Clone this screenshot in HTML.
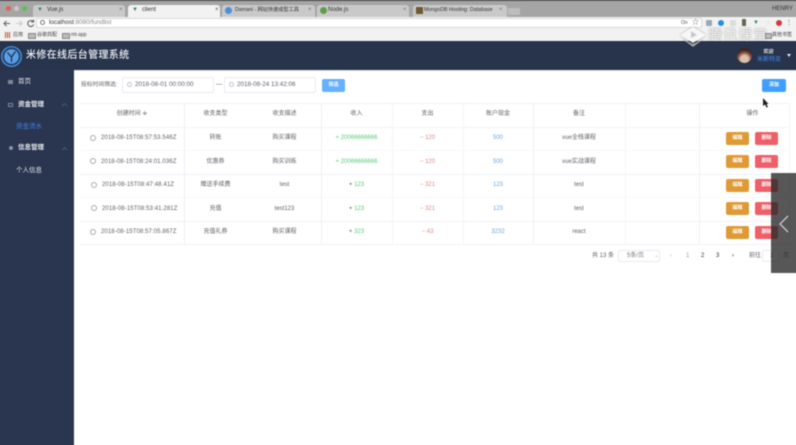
<!DOCTYPE html>
<html lang="zh"><head><meta charset="utf-8">
<style>
html,body{margin:0;padding:0;width:796px;height:445px;overflow:hidden;background:#fff}
body{position:relative;font-family:"Liberation Sans","Noto Sans CJK SC",sans-serif;color:#606266}
.a{position:absolute}
.t{position:absolute;white-space:nowrap;line-height:10px;font-size:6px;transform-origin:center}
.c{text-align:center}
#wrap{position:absolute;left:0;top:0;width:796px;height:445px;filter:blur(.4px)}
.tab{position:absolute;top:5px;height:12px;background:#c9c9c9;border-radius:3px 3px 0 0;font-size:6px;line-height:11px;color:#333}
.hl{position:absolute;height:1px;background:#eef0f5;left:80px;width:709px}
.vl{position:absolute;width:1px;background:#eef0f5;top:103px;height:141px}
.btn{position:absolute;width:23px;height:13px;border-radius:2px;color:#fff;font-size:5px;line-height:13px;text-align:center;font-weight:bold}
.o{background:#e09a35;left:726px}.r{background:#ee5f69;left:755px}
.g{color:#5fc87a}.d{color:#d98a8a}.b{color:#6ea6dc}
.clk{position:absolute;left:90px;width:6px;height:6px;border:.7px solid #aaa;border-radius:50%;box-sizing:border-box}
</style></head><body>
<div id="wrap">
<!-- chrome -->
<div class="a" style="left:-6px;top:-6px;width:808px;height:7px;background:#555"></div>
<div class="a" style="left:-6px;top:1px;width:808px;height:16px;background:#a5a5a5"></div>
<div class="a" style="left:6px;top:6px;width:5px;height:5px;border-radius:50%;background:#e0625a"></div>
<div class="a" style="left:14px;top:6px;width:5px;height:5px;border-radius:50%;background:#c9c9c9"></div>
<div class="a" style="left:22px;top:6px;width:5px;height:5px;border-radius:50%;background:#5cc05a"></div>
<div class="tab" style="left:33px;width:92px"><span style="color:#2f8a70;margin:0 4px 0 4px">▼</span>Vue.js<span class="a" style="left:86px;color:#777">×</span></div>
<div class="tab" style="left:128px;width:92px;background:#f2f2f2"><span style="color:#2f8a70;margin:0 4px 0 4px">▼</span>client<span class="a" style="left:87px;color:#555">×</span></div>
<div class="tab" style="left:222px;width:93px"><span class="a" style="left:3px;top:2px;width:7px;height:7px;border-radius:50%;background:#4a90d9"></span><span style="margin-left:13px;font-size:5.2px">Damani - 网站快速成型工具</span><span class="a" style="left:86px;color:#777">×</span></div>
<div class="tab" style="left:317px;width:92px"><span class="a" style="left:3px;top:2px;width:7px;height:7px;border-radius:50%;background:#5aa04a"></span><span style="margin-left:11px">Node.js</span><span class="a" style="left:86px;color:#777">×</span></div>
<div class="tab" style="left:413px;width:94px"><span class="a" style="left:3px;top:2px;width:7px;height:7px;background:#6b5a2a"></span><span style="margin-left:11px;font-size:5.3px">MongoDB Hosting: Database</span><span class="a" style="left:86px;color:#777;background:#c9c9c9">×</span></div>
<div class="a" style="left:508px;top:8px;width:12px;height:7px;background:#bdbdbd"></div>
<div class="t" style="left:772px;top:4px;font-size:6px;color:#333">HENRY</div>

<div class="a" style="left:-6px;top:17px;width:808px;height:12px;background:#f2f2f2"></div>
<div class="a" style="left:36px;top:18px;width:666px;height:10px;background:#fff;border:1px solid #d8d8d8;border-radius:2px;box-sizing:border-box"></div>
<svg class="a" style="left:0;top:16px" width="40" height="15" viewBox="0 0 40 15" fill="none" stroke-width="1.1">
<path d="M10 7.500H4M6.500 5L4 7.500 6.500 10" stroke="#666"/><path d="M16 7.500h6M19.500 5L22 7.500 19.500 10" stroke="#ccc"/><path d="M33 5.500a3 3 0 1 0 .6 3" stroke="#666"/><path d="M33.500 3.500v2.500h-2.500" stroke="#666"/></svg>
<div class="a" style="left:40px;top:20px;width:5px;height:5px;border:1px solid #777;border-radius:50%;box-sizing:border-box"></div>
<div class="t" style="left:49px;top:18px;font-size:6.3px;color:#333">localhost<span style="color:#888">:8080/fundlist</span></div>
<div class="t" style="left:681px;top:18px;font-size:5px;color:#555">On</div>
<div class="t" style="left:692px;top:18px;font-size:7px;color:#666">☆</div>
<div class="a" style="left:706px;top:20px;width:6px;height:6px;background:#9aa8b8;border-radius:1px"></div>
<div class="a" style="left:718px;top:20px;width:6px;height:6px;background:#2a8fd8;border-radius:50%"></div>
<div class="a" style="left:730px;top:20px;width:6px;height:6px;background:#ddd"></div>
<div class="a" style="left:742px;top:19px;width:4px;height:7px;background:#665"></div>
<div class="t" style="left:753px;top:18px;font-size:6px;color:#2f8a70">▼</div>
<div class="a" style="left:765px;top:20px;width:6px;height:6px;background:#eee;border-radius:50%"></div>
<div class="a" style="left:776px;top:20px;width:6px;height:6px;background:#d9363e;border-radius:50%"></div>
<div class="t" style="left:786px;top:18px;font-size:6px;color:#555">⋮</div>

<div class="a" style="left:-6px;top:29px;width:808px;height:12px;background:#f2f2f2"></div>
<div class="a" style="left:5px;top:32px;width:5px;height:6px;background:repeating-linear-gradient(90deg,#c8502a 0 1px,transparent 1px 2px)"></div>
<div class="t" style="left:13px;top:30px;font-size:5px;color:#444">应用</div>
<div class="a" style="left:28px;top:33px;width:6px;height:4px;background:#bbb;border:.5px solid #888"></div>
<div class="t" style="left:37px;top:30px;font-size:5px;color:#444">谷歌商配</div>
<div class="a" style="left:62px;top:33px;width:6px;height:4px;background:#bbb;border:.5px solid #888"></div>
<div class="t" style="left:71px;top:30px;font-size:5px;color:#444">mt-app</div>
<div class="a" style="left:765px;top:33px;width:5px;height:4px;background:#bbb;border:.5px solid #888"></div>
<div class="t" style="left:772px;top:30px;font-size:5px;color:#444">其他书签</div>

<!-- header -->
<div class="a" style="left:-6px;top:41px;width:808px;height:29px;background:#28344c"></div>
<div class="a" style="left:-6px;top:70px;width:808px;height:1px;background:#dfe6f0"></div>
<svg class="a" style="left:1px;top:46px" width="21" height="21" viewBox="0 0 21 21" fill="none">
<circle cx="10.500" cy="10.500" r="9.800" fill="#24426e" stroke="#4d9be8" stroke-width="1.200"/><circle cx="10.500" cy="10.500" r="7.300" fill="#5a9fe6"/><path d="M6.500 6.500l4 4.500M14.500 5.500l-4 5.500v5" stroke="#22304a" stroke-width="1.300"/></svg>
<div class="t" style="left:26px;top:50px;font-size:10px;line-height:12px;letter-spacing:.35px;color:#eef0f4;font-weight:500">米修在线后台管理系统</div>
<div class="a" style="left:737px;top:48px;width:15px;height:15px;border-radius:50%;background:radial-gradient(circle at 50% 75%,#dcc0ac 0 28%,#8f5646 48%,#3e2522 68%)"></div>
<div class="t c" style="left:755px;top:47px;width:27px;font-size:5px;color:#e8e8e8;font-weight:bold">欢迎</div>
<div class="t c" style="left:755px;top:55px;width:28px;font-size:6px;color:#3f8cf0">米斯特吴</div>
<div class="a" style="left:787px;top:54px;border:2px solid transparent;border-top:3px solid #e8e8e8"></div>

<!-- sidebar -->
<div class="a" style="left:-6px;top:70px;width:80px;height:381px;background:#2a3650"></div>
<div class="a" style="left:8px;top:80px;width:5px;height:4px;background:#7d8696"></div>
<div class="t" style="left:18px;top:77px;font-size:6.500px;color:#e6e8ec">首页</div>
<div class="a" style="left:8px;top:103px;width:5px;height:4px;border:1px solid #7d8696;box-sizing:border-box"></div>
<div class="t" style="left:18px;top:100px;font-size:6.500px;color:#e6e8ec;font-weight:bold">资金管理</div>
<svg class="a" style="left:61px;top:102px" width="7" height="5" fill="none"><path d="M1 4l2.500-2.500L6 4" stroke="#4a566c"/></svg>
<div class="t" style="left:16px;top:122px;font-size:6.500px;color:#3f7fe8">资金流水</div>
<div class="a" style="left:9px;top:146px;width:4px;height:4px;border-radius:50%;background:#8a93a3"></div>
<div class="t" style="left:18px;top:143px;font-size:6.500px;color:#e6e8ec;font-weight:bold">信息管理</div>
<svg class="a" style="left:61px;top:146px" width="7" height="5" fill="none"><path d="M1 4l2.500-2.500L6 4" stroke="#4a566c"/></svg>
<div class="t" style="left:16px;top:166px;font-size:6.500px;color:#e6e8ec">个人信息</div>

<!-- filter -->
<div class="t" style="left:81px;top:80px;font-size:5.800px;color:#606266">投标时间筛选:</div>
<div class="a" style="left:122px;top:77px;width:92px;height:16px;border:1px solid #e9ebf0;box-sizing:border-box;border-radius:2px"></div>
<div class="a" style="left:127px;top:82px;width:5px;height:5px;border:.7px solid #c0c4cc;border-radius:50%;box-sizing:border-box"></div>
<div class="t" style="left:135px;top:80px;font-size:6.300px;color:#606266">2018-08-01 00:00:00</div>
<div class="t" style="left:216px;top:80px;font-size:6.500px;color:#606266">—</div>
<div class="a" style="left:224px;top:77px;width:92px;height:16px;border:1px solid #e9ebf0;box-sizing:border-box;border-radius:2px"></div>
<div class="a" style="left:229px;top:82px;width:5px;height:5px;border:.7px solid #c0c4cc;border-radius:50%;box-sizing:border-box"></div>
<div class="t" style="left:237px;top:80px;font-size:6.300px;color:#606266">2018-08-24 13:42:06</div>
<div class="a" style="left:322px;top:79px;width:23px;height:13px;background:#66b1ff;border-radius:2px;color:#fff;font-size:5px;line-height:13px;text-align:center;font-weight:bold">筛选</div>
<div class="a" style="left:762px;top:79px;width:24px;height:13px;background:#409eff;border-radius:2px;color:#fff;font-size:5px;line-height:13px;text-align:center;font-weight:bold">添加</div>

<!-- table -->
<div class="hl" style="top:103px;background:#f3f4f7"></div>
<div class="hl" style="top:127px;background:#f2f3f6"></div>
<div class="hl" style="top:150px;background:#f7f8fa"></div>
<div class="hl" style="top:174px"></div>
<div class="hl" style="top:197px;background:#f7f8fa"></div>
<div class="hl" style="top:221px"></div>
<div class="hl" style="top:244px;background:#f3f4f7"></div>
<div class="vl" style="left:184px"></div>
<div class="vl" style="left:321px"></div>
<div class="vl" style="left:392px;background:#f5f6f8"></div>
<div class="vl" style="left:463px;background:#f5f6f8"></div>
<div class="vl" style="left:533px"></div>
<div class="vl" style="left:625px;background:#f5f6f8"></div>
<div class="vl" style="left:699px"></div>
<div class="vl" style="left:789px;background:#f5f6f8"></div>

<!-- header row -->
<div class="t c" style="left:80px;width:104px;top:109px">创建时间 ≑</div>
<div class="t c" style="left:181px;width:69px;top:109px">收支类型</div>
<div class="t c" style="left:250px;width:69px;top:109px">收支描述</div>
<div class="t c" style="left:321px;width:71px;top:109px">收入</div>
<div class="t c" style="left:392px;width:71px;top:109px">支出</div>
<div class="t c" style="left:463px;width:70px;top:109px">账户现金</div>
<div class="t c" style="left:533px;width:92px;top:109px">备注</div>
<div class="t c" style="left:716px;width:73px;top:109px">操作</div>

<!-- rows -->
<div class="clk" style="top:135px"></div>
<div class="t" style="left:101px;top:133px;letter-spacing:.1px">2018-08-15T08:57:53.546Z</div>
<div class="t c" style="left:181px;width:69px;top:133px">转账</div>
<div class="t c" style="left:250px;width:69px;top:133px">购买课程</div>
<div class="t c g" style="left:321px;width:71px;top:133px">+ 20066666666</div>
<div class="t c d" style="left:392px;width:71px;top:133px">− 120</div>
<div class="t c b" style="left:463px;width:70px;top:133px">500</div>
<div class="t c" style="left:533px;width:92px;top:133px">vue全栈课程</div>

<div class="clk" style="top:158px"></div>
<div class="t" style="left:101px;top:157px;letter-spacing:.1px">2018-08-15T08:24:01.036Z</div>
<div class="t c" style="left:181px;width:69px;top:157px">优惠券</div>
<div class="t c" style="left:250px;width:69px;top:157px">购买训练</div>
<div class="t c g" style="left:321px;width:71px;top:157px">+ 20066666666</div>
<div class="t c d" style="left:392px;width:71px;top:157px">− 120</div>
<div class="t c b" style="left:463px;width:70px;top:157px">500</div>
<div class="t c" style="left:533px;width:92px;top:157px">vue实战课程</div>

<div class="clk" style="top:182px;left:91px"></div>
<div class="t" style="left:102px;top:180px;letter-spacing:.1px">2018-08-15T08:47:48.41Z</div>
<div class="t c" style="left:181px;width:69px;top:180px">赠送手续费</div>
<div class="t c" style="left:250px;width:69px;top:180px">test</div>
<div class="t c g" style="left:321px;width:71px;top:180px"><span style="color:#606266">+</span> 123</div>
<div class="t c d" style="left:392px;width:71px;top:180px">− 321</div>
<div class="t c b" style="left:463px;width:70px;top:180px">123</div>
<div class="t c" style="left:533px;width:92px;top:180px">test</div>

<div class="clk" style="top:205px;left:91px"></div>
<div class="t" style="left:102px;top:204px;letter-spacing:.1px">2018-08-15T08:53:41.281Z</div>
<div class="t c" style="left:181px;width:69px;top:204px">充值</div>
<div class="t c" style="left:250px;width:69px;top:204px">test123</div>
<div class="t c g" style="left:321px;width:71px;top:204px"><span style="color:#606266">+</span> 123</div>
<div class="t c d" style="left:392px;width:71px;top:204px">− 321</div>
<div class="t c b" style="left:463px;width:70px;top:204px">123</div>
<div class="t c" style="left:533px;width:92px;top:204px">test</div>

<div class="clk" style="top:229px"></div>
<div class="t" style="left:101px;top:227px;letter-spacing:.1px">2018-08-15T08:57:05.867Z</div>
<div class="t c" style="left:181px;width:69px;top:227px">充值礼券</div>
<div class="t c" style="left:250px;width:69px;top:227px">购买课程</div>
<div class="t c g" style="left:321px;width:71px;top:227px"><span style="color:#606266">+</span> 323</div>
<div class="t c d" style="left:392px;width:71px;top:227px">− 43</div>
<div class="t c b" style="left:463px;width:70px;top:227px">3232</div>
<div class="t c" style="left:533px;width:92px;top:227px">react</div>

<!-- buttons -->
<div class="btn o" style="top:132px">编辑</div><div class="btn r" style="top:132px">删除</div>
<div class="btn o" style="top:155px">编辑</div><div class="btn r" style="top:155px">删除</div>
<div class="btn o" style="top:179px">编辑</div><div class="btn r" style="top:179px">删除</div>
<div class="btn o" style="top:202px">编辑</div><div class="btn r" style="top:202px">删除</div>
<div class="btn o" style="top:226px">编辑</div><div class="btn r" style="top:226px">删除</div>

<!-- pagination -->
<div class="t" style="left:592px;top:251px">共 13 条</div>
<div class="a" style="left:618px;top:250px;width:42px;height:12px;border:1px solid #e9ebf0;box-sizing:border-box;border-radius:2px"></div>
<div class="t" style="left:627px;top:251px;color:#777">5条/页</div>
<div class="t" style="left:654px;top:251px;color:#c0c4cc">⌄</div>
<div class="t" style="left:670px;top:251px;color:#c0c4cc">‹</div>
<div class="t" style="left:686px;top:251px;color:#999">1</div>
<div class="t" style="left:701px;top:251px;color:#303133">2</div>
<div class="t" style="left:716px;top:251px;color:#303133">3</div>
<div class="t" style="left:732px;top:251px;color:#303133">›</div>
<div class="t" style="left:749px;top:251px">前往</div>
<div class="a" style="left:762px;top:250px;width:18px;height:12px;border:1px solid #e9ebf0;box-sizing:border-box;border-radius:2px"></div>
<div class="t" style="left:770px;top:251px">1</div>
<div class="t" style="left:783px;top:251px">页</div>

<!-- cursor -->
<svg class="a" style="left:762px;top:98px" width="7" height="10" viewBox="0 0 7 10"><path d="M1 0v8l2-1.500L4.500 9.500 6 9 4.500 6H6.500z" fill="#222"/></svg>

<!-- watermark -->
<svg class="a" style="left:679px;top:26px;filter:drop-shadow(0 0 1px rgba(0,0,0,.35))" width="28" height="22" viewBox="0 0 28 22"><path d="M14 1l13 8-13 8L1 9z" fill="#fff" opacity=".9"/><path d="M2 12l12 9 12-9-12 6z" fill="#d7d7d7" opacity=".7"/><path d="M12 5l6 4-6 3z" fill="#aaa" opacity=".6"/></svg>
<div class="t" style="left:708px;top:27px;font-size:14.500px;line-height:18px;color:rgba(255,255,255,.85);letter-spacing:.4px;text-shadow:0 0 1.500px rgba(0,0,0,.45)">腾讯课堂</div>

<!-- side handle -->
<div class="a" style="left:771px;top:173px;width:31px;height:100px;background:rgba(40,40,40,.78)"></div>
<svg class="a" style="left:778px;top:215px" width="12" height="18" viewBox="0 0 12 18" fill="none"><path d="M10 1L2 9l8 8" stroke="#c8c8c8" stroke-width="1.300"/></svg>
</div>
</body></html>
